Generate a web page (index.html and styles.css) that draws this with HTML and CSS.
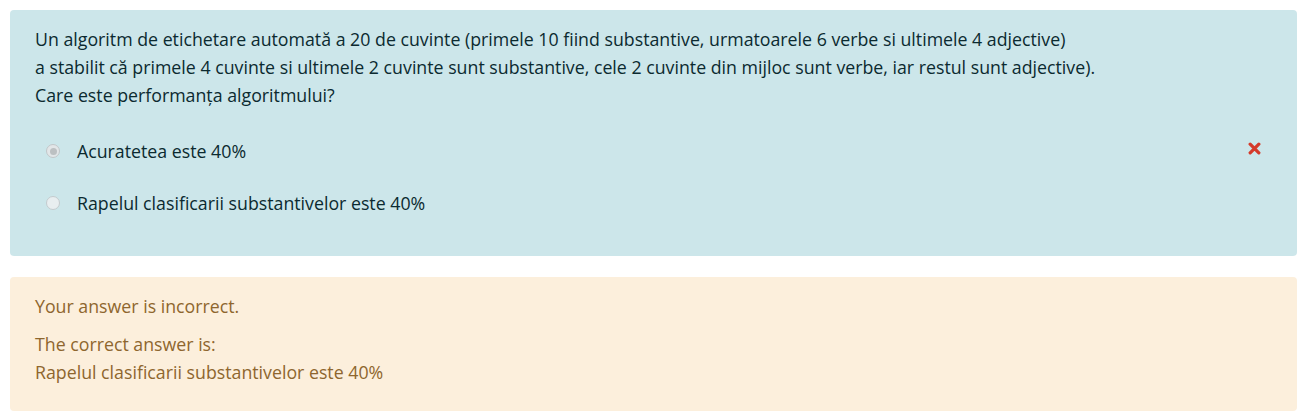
FILE: index.html
```html
<!DOCTYPE html>
<html lang="ro">
<head>
<meta charset="utf-8">
<title>Întrebare</title>
<link rel="stylesheet" href="styles.css">
</head>
<body>
<div class="que">
  <div class="formulation">
    <div class="qtext">
      Un algoritm de etichetare automată a 20 de cuvinte (primele 10 fiind substantive, urmatoarele 6 verbe si ultimele 4 adjective)<br>
      a stabilit că primele 4 cuvinte si ultimele 2 cuvinte sunt substantive, cele 2 cuvinte din mijloc sunt verbe, iar restul sunt adjective).<br>
      Care este performanța algoritmului?
    </div>
    <div class="answer">
      <div class="option">
        <span class="radio checked"></span>
        <span class="label">Acuratetea este 40%</span>
        <svg class="wrong" viewBox="0 0 12 12" width="13" height="13" aria-hidden="true">
          <path d="M2 2 L10 10 M10 2 L2 10" stroke="#d43a2a" stroke-width="3" stroke-linecap="round"/>
        </svg>
      </div>
      <div class="option">
        <span class="radio"></span>
        <span class="label">Rapelul clasificarii substantivelor este 40%</span>
      </div>
    </div>
  </div>
  <div class="outcome">
    <p class="feedback">Your answer is incorrect.</p>
    <p class="rightanswer">The correct answer is:<br>Rapelul clasificarii substantivelor este 40%</p>
  </div>
</div>
</body>
</html>
```
FILE: styles.css
```css
html, body {
  margin: 0;
  background: #ffffff;
}
body {
  padding: 10px 11px 9px 10px;
  font-family: "Open Sans", "Noto Sans", sans-serif;
  font-size: 17.75px;
  line-height: 28px;
}
.que {
  display: flex;
  flex-direction: column;
  gap: 21px;
}
.formulation {
  background: #cce6ea;
  color: #0b2a30;
  border-radius: 4px;
  padding: 15px 36px 39px 25px;
}
.answer {
  margin-top: 28px;
  display: flex;
  flex-direction: column;
  gap: 24px;
}
.option {
  display: flex;
  align-items: center;
  height: 28px;
}
.radio {
  width: 14px;
  height: 14px;
  box-sizing: border-box;
  border-radius: 50%;
  border: 1px solid #c4cbce;
  background: #e8eef0;
  margin-left: 11px;
  margin-right: 17px;
  position: relative;
  flex: none;
}
.radio.checked {
  background: #e2e6e8;
  border-color: #c2c7c9;
}
.radio.checked::after {
  content: "";
  position: absolute;
  left: 2.5px;
  top: 2.5px;
  width: 7px;
  height: 7px;
  border-radius: 50%;
  background: #bcc0c2;
}
.label {
  flex: 1;
}
.wrong {
  flex: none;
  margin-top: -6px;
}
.outcome {
  background: #fcefdc;
  color: #8e662e;
  border-radius: 4px;
  padding: 15px 25px 25px 25px;
}
.outcome p {
  margin: 0;
}
.outcome .feedback {
  margin-bottom: 10px;
}
```
